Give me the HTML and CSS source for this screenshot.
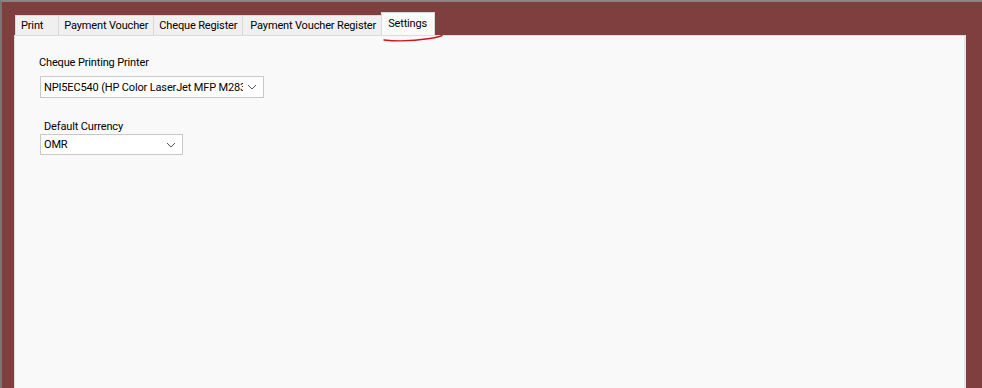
FILE: index.html
```html
<!DOCTYPE html>
<html lang="en">
<head>
    <meta charset="UTF-8">
    <title>Settings</title>
    <link rel="stylesheet" href="styles.css">
</head>
<body>
    <div class="window">
        <div class="tabs">
            <div class="tab">Print</div>
            <div class="tab">Payment Voucher</div>
            <div class="tab">Cheque Register</div>
            <div class="tab">Payment Voucher Register</div>
            <div class="tab active">Settings</div>
            <svg class="scribble" width="62" height="10" viewBox="0 0 62 10">
                <path d="M2 7 C 15 8.5, 35 7.5, 48 5.5 S 58 3, 60 2.5" fill="none" stroke="#d0141e" stroke-width="1.4" stroke-linecap="round"/>
            </svg>
        </div>
        <div class="panel">
            <div class="field printer">
                <label class="label">Cheque Printing Printer</label>
                <div class="combo wide">
                    <span class="value">NPI5EC540 (HP Color LaserJet MFP M283</span>
                    <svg class="arrow" width="10" height="6" viewBox="0 0 10 6"><path d="M1 1 L5 5 L9 1" fill="none" stroke="#555" stroke-width="1"/></svg>
                </div>
            </div>
            <div class="field currency">
                <label class="label">Default Currency</label>
                <div class="combo narrow">
                    <span class="value">OMR</span>
                    <svg class="arrow" width="10" height="6" viewBox="0 0 10 6"><path d="M1 1 L5 5 L9 1" fill="none" stroke="#555" stroke-width="1"/></svg>
                </div>
            </div>
        </div>
    </div>
</body>
</html>
```

FILE: styles.css
```css
* {
    margin: 0;
    padding: 0;
    box-sizing: border-box;
}

html, body {
    width: 982px;
    height: 388px;
    overflow: hidden;
}

body {
    background: #7f3f3f;
    font-family: Roboto, 'Liberation Sans', sans-serif;
    font-size: 11px;
    letter-spacing: -0.15px;
    color: #000;
}

.window {
    height: 388px;
    border-top: 2px solid #8a8585;
    border-left: 2px solid #7a7575;
    padding: 10px 16px 0 12px;
    display: flex;
    flex-direction: column;
}

.tabs {
    display: flex;
    align-items: flex-end;
    height: 23px;
    padding-left: 1px;
    position: relative;
}

.tab {
    height: 20px;
    line-height: 19px;
    padding: 0 5px;
    background: #f0f0f0;
    border: 1px solid #d9d9d9;
    border-bottom: none;
    margin-right: -1px;
    white-space: nowrap;
}

.tab:first-child {
    padding-right: 15px;
}

.tab:nth-child(4) {
    padding: 0 6px 0 7px;
}

.tab.active {
    height: 23px;
    line-height: 21px;
    background: #fafafa;
    margin-left: -1px;
    padding: 0 7px 0 6px;
    position: relative;
    z-index: 1;
}

.scribble {
    position: absolute;
    left: 368px;
    top: 21px;
    z-index: 2;
}

.panel {
    flex: 1;
    background: #f9f9f9;
    border: 1px solid #dcdcdc;
    border-bottom: none;
    border-right: 2px solid #e4e4e4;
    padding: 20px 0 0 24px;
}

.field {
    display: flex;
    flex-direction: column;
}

.printer .label {
    margin-bottom: 7px;
}

.currency {
    margin-top: 22px;
}

.currency .label {
    padding-left: 5px;
    margin-bottom: 1px;
}

.combo {
    display: flex;
    align-items: center;
    height: 21px;
    background: #fff;
    border: 1px solid #c8c8c8;
    padding: 0 6px 0 3px;
    margin-left: 1px;
    overflow: hidden;
    font-size: 11px;
}

.combo.wide {
    width: 224px;
    height: 22px;
}

.combo.narrow {
    width: 143px;
}

.value {
    flex: 1;
    white-space: nowrap;
    overflow: hidden;
}

.arrow {
    flex: none;
    margin-left: 4px;
}
```
